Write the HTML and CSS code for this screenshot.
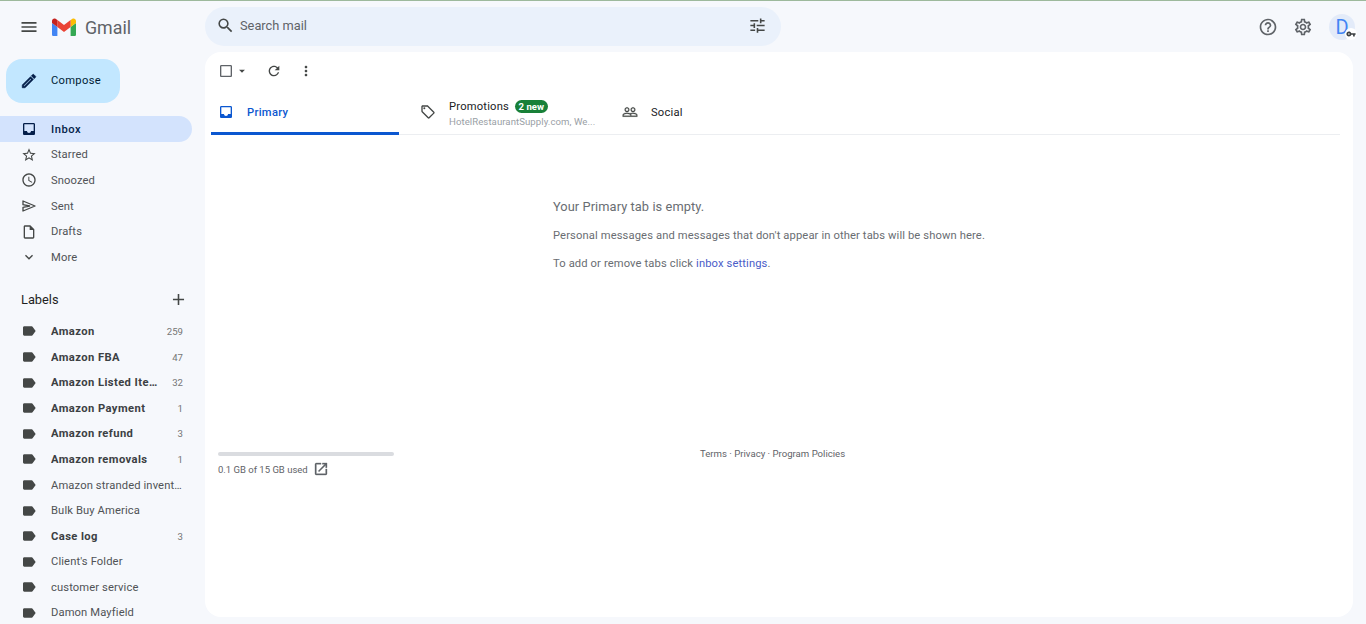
FILE: index.html
```html
<!DOCTYPE html>
<html lang="en">
<head>
<meta charset="utf-8">
<title>Gmail</title>
<link rel="stylesheet" href="styles.css">
</head>
<body>
<svg class="defs" width="0" height="0">
  <symbol id="i-menu" viewBox="0 0 24 24"><path d="M3 18h18v-2H3v2zm0-5h18v-2H3v2zm0-7v2h18V6H3z"/></symbol>
  <symbol id="i-search" viewBox="0 0 24 24"><path d="M15.5 14h-.79l-.28-.27A6.471 6.471 0 0 0 16 9.5 6.5 6.5 0 1 0 9.5 16c1.61 0 3.09-.59 4.23-1.57l.27.28v.79l5 4.99L20.49 19l-4.99-5zm-6 0C7.01 14 5 11.99 5 9.5S7.01 5 9.5 5 14 7.01 14 9.5 11.99 14 9.5 14z"/></symbol>
  <symbol id="i-tune" viewBox="0 0 24 24"><path d="M3 17v2h6v-2H3zM3 5v2h10V5H3zm10 16v-2h8v-2h-8v-2h-2v6h2zM7 9v2H3v2h4v2h2V9H7zm14 4v-2H11v2h10zm-6-4h2V7h4V5h-4V3h-2v6z"/></symbol>
  <symbol id="i-help" viewBox="0 0 24 24"><path d="M11 18h2v-2h-2v2zm1-16C6.48 2 2 6.48 2 12s4.48 10 10 10 10-4.48 10-10S17.52 2 12 2zm0 18c-4.41 0-8-3.59-8-8s3.59-8 8-8 8 3.59 8 8-3.59 8-8 8zm0-14c-2.21 0-4 1.79-4 4h2c0-1.1.9-2 2-2s2 .9 2 2c0 2-3 1.75-3 5h2c0-2.25 3-2.5 3-5 0-2.21-1.79-4-4-4z"/></symbol>
  <symbol id="i-gear" viewBox="0 0 24 24"><path d="M19.43 12.98c.04-.32.07-.64.07-.98 0-.34-.03-.66-.07-.98l2.11-1.65c.19-.15.24-.42.12-.64l-2-3.46c-.09-.16-.26-.25-.44-.25-.06 0-.12.01-.17.03l-2.49 1c-.52-.4-1.08-.73-1.69-.98l-.38-2.65C14.46 2.18 14.25 2 14 2h-4c-.25 0-.46.18-.49.42l-.38 2.65c-.61.25-1.17.59-1.69.98l-2.49-1c-.06-.02-.12-.03-.18-.03-.17 0-.34.09-.43.25l-2 3.46c-.13.22-.07.49.12.64l2.11 1.65c-.04.32-.07.65-.07.98 0 .33.03.66.07.98l-2.11 1.65c-.19.15-.24.42-.12.64l2 3.46c.09.16.26.25.44.25.06 0 .12-.01.17-.03l2.49-1c.52.4 1.08.73 1.69.98l.38 2.65c.03.24.24.42.49.42h4c.25 0 .46-.18.49-.42l.38-2.65c.61-.25 1.17-.59 1.69-.98l2.49 1c.06.02.12.03.18.03.17 0 .34-.09.43-.25l2-3.46c.12-.22.07-.49-.12-.64l-2.11-1.65zm-1.98-1.71c.04.31.05.52.05.73 0 .21-.02.43-.05.73l-.14 1.13.89.7 1.08.84-.7 1.21-1.27-.51-1.04-.42-.9.68c-.43.32-.84.56-1.25.73l-1.06.43-.16 1.13-.2 1.35h-1.4l-.19-1.35-.16-1.13-1.06-.43c-.43-.18-.83-.41-1.23-.71l-.91-.7-1.06.43-1.27.51-.7-1.21 1.08-.84.89-.7-.14-1.13c-.03-.31-.05-.54-.05-.74s.02-.43.05-.73l.14-1.13-.89-.7-1.08-.84.7-1.21 1.27.51 1.04.42.9-.68c.43-.32.84-.56 1.25-.73l1.06-.43.16-1.13.2-1.35h1.39l.19 1.35.16 1.13 1.06.43c.43.18.83.41 1.23.71l.91.7 1.06-.43 1.27-.51.7 1.21-1.07.85-.89.7.14 1.13zM12 8c-2.21 0-4 1.79-4 4s1.79 4 4 4 4-1.79 4-4-1.79-4-4-4zm0 6c-1.1 0-2-.9-2-2s.9-2 2-2 2 .9 2 2-.9 2-2 2z"/></symbol>
  <symbol id="i-edit" viewBox="0 0 24 24"><path d="M3 17.25V21h3.75L17.81 9.94l-3.75-3.75L3 17.25zM5.92 19H5v-.92l9.06-9.06.92.92L5.92 19zM20.71 5.63l-2.34-2.34c-.2-.2-.45-.29-.71-.29s-.51.09-.7.28l-1.83 1.83 3.75 3.75 1.83-1.83c.39-.39.39-1.02 0-1.41z"/></symbol>
  <symbol id="i-inbox" viewBox="0 0 24 24"><path d="M19 3H5c-1.1 0-2 .9-2 2v14c0 1.1.9 2 2 2h14c1.1 0 2-.9 2-2V5c0-1.1-.9-2-2-2zm0 12h-4c0 1.66-1.35 3-3 3s-3-1.34-3-3H5V5h14v10z"/></symbol>
  <symbol id="i-star" viewBox="0 0 24 24"><path d="M22 9.24l-7.19-.62L12 2 9.19 8.63 2 9.24l5.46 4.73L5.82 21 12 17.27 18.18 21l-1.63-7.03L22 9.24zM12 15.4l-3.76 2.27 1-4.28-3.32-2.88 4.38-.38L12 6.1l1.71 4.04 4.38.38-3.32 2.88 1 4.28L12 15.4z"/></symbol>
  <symbol id="i-clock" viewBox="0 0 24 24"><path d="M11.99 2C6.47 2 2 6.48 2 12s4.47 10 9.99 10C17.52 22 22 17.52 22 12S17.52 2 11.99 2zM12 20c-4.42 0-8-3.58-8-8s3.58-8 8-8 8 3.58 8 8-3.58 8-8 8zm.5-13H11v6l5.25 3.15.75-1.23-4.5-2.67z"/></symbol>
  <symbol id="i-send" viewBox="0 0 24 24"><path fill="none" stroke="#444746" stroke-width="2" stroke-linejoin="round" d="M3 4.5L21 12 3 19.5V14l10-2-10-2z"/></symbol>
  <symbol id="i-draft" viewBox="0 0 24 24"><path d="M14 2H6c-1.1 0-2 .9-2 2v16c0 1.1.89 2 1.99 2H18c1.1 0 2-.9 2-2V8l-6-6zM6 20V4h7v5h5v11H6z"/></symbol>
  <symbol id="i-chev" viewBox="0 0 24 24"><path d="M16.59 8.59L12 13.17 7.41 8.59 6 10l6 6 6-6z"/></symbol>
  <symbol id="i-label" viewBox="0 0 24 24"><path d="M17.63 5.84C17.27 5.33 16.67 5 16 5L5 5.01C3.9 5.01 3 5.9 3 7v10c0 1.1.9 1.99 2 1.99L16 19c.67 0 1.27-.33 1.63-.84L22 12l-4.37-6.16z"/></symbol>
  <symbol id="i-plus" viewBox="0 0 24 24"><path d="M19 13h-6v6h-2v-6H5v-2h6V5h2v6h6v2z"/></symbol>
  <symbol id="i-check" viewBox="0 0 24 24"><path d="M19 5v14H5V5h14m0-2H5c-1.1 0-2 .9-2 2v14c0 1.1.9 2 2 2h14c1.1 0 2-.9 2-2V5c0-1.1-.9-2-2-2z"/></symbol>
  <symbol id="i-drop" viewBox="0 0 24 24"><path d="M7 10l5 5 5-5z"/></symbol>
  <symbol id="i-refresh" viewBox="0 0 24 24"><path d="M17.65 6.35C16.2 4.9 14.21 4 12 4c-4.42 0-7.99 3.58-7.99 8s3.57 8 7.99 8c3.73 0 6.84-2.55 7.73-6h-2.08c-.82 2.33-3.04 4-5.65 4-3.31 0-6-2.69-6-6s2.69-6 6-6c1.66 0 3.14.69 4.22 1.78L13 11h7V4l-2.35 2.35z"/></symbol>
  <symbol id="i-vert" viewBox="0 0 24 24"><path d="M12 8c1.1 0 2-.9 2-2s-.9-2-2-2-2 .9-2 2 .9 2 2 2zm0 2c-1.1 0-2 .9-2 2s.9 2 2 2 2-.9 2-2-.9-2-2-2zm0 6c-1.1 0-2 .9-2 2s.9 2 2 2 2-.9 2-2-.9-2-2-2z"/></symbol>
  <symbol id="i-tag" viewBox="0 0 24 24"><path d="M21.41 11.58l-9-9C12.05 2.22 11.55 2 11 2H4c-1.1 0-2 .9-2 2v7c0 .55.22 1.05.59 1.42l9 9c.36.36.86.58 1.41.58.55 0 1.05-.22 1.41-.59l7-7c.37-.36.59-.86.59-1.41 0-.55-.23-1.06-.59-1.42zM13 20.01L4 11V4h7v-.01l9 9-7 7.02z"/><circle cx="6.5" cy="6.5" r="1.5"/></symbol>
  <symbol id="i-people" viewBox="0 0 24 24"><path d="M16.5 13c-1.2 0-3.07.34-4.5 1-1.43-.67-3.3-1-4.5-1C5.33 13 1 14.08 1 16.25V19h22v-2.75c0-2.17-4.33-3.25-6.5-3.25zm-4 4.5h-10v-1.25c0-.54 2.56-1.75 5-1.75s5 1.21 5 1.75v1.25zm9 0H14v-1.25c0-.46-.2-.86-.52-1.22.88-.3 1.96-.53 3.02-.53 2.44 0 5 1.21 5 1.75v1.25zM7.5 12c1.93 0 3.5-1.57 3.5-3.5S9.43 5 7.5 5 4 6.57 4 8.5 5.57 12 7.5 12zm0-5.5c1.1 0 2 .9 2 2s-.9 2-2 2-2-.9-2-2 .9-2 2-2zm9 5.5c1.93 0 3.5-1.57 3.5-3.5S18.43 5 16.5 5 13 6.57 13 8.5s1.57 3.5 3.5 3.5zm0-5.5c1.1 0 2 .9 2 2s-.9 2-2 2-2-.9-2-2 .9-2 2-2z"/></symbol>
  <symbol id="i-open" viewBox="0 0 24 24"><path d="M19 19H5V5h7V3H5c-1.11 0-2 .9-2 2v14c0 1.1.89 2 2 2h14c1.1 0 2-.9 2-2v-7h-2v7zM14 3v2h3.59l-9.83 9.83 1.41 1.41L19 6.41V10h2V3h-7z"/></symbol>
  <symbol id="i-key" viewBox="0 0 24 24"><path d="M12.65 10C11.83 7.67 9.61 6 7 6c-3.31 0-6 2.69-6 6s2.69 6 6 6c2.61 0 4.83-1.67 5.65-4H17v4h4v-4h2v-4H12.65zM7 14c-1.1 0-2-.9-2-2s.9-2 2-2 2 .9 2 2-.9 2-2 2z"/></symbol>
</svg>

<div class="app">
  <header class="topbar">
    <div class="brand">
      <svg class="ico ico-menu"><use href="#i-menu"/></svg>
      <svg class="logo" viewBox="0 0 24 18">
        <path fill="#4285f4" d="M1.6 18H5.4V9L0 5v11.4C0 17.3.7 18 1.6 18z"/>
        <path fill="#34a853" d="M18.6 18h3.8c.9 0 1.6-.7 1.6-1.6V5l-5.4 4z"/>
        <path fill="#fbbc04" d="M18.6 2v7L24 5V2.9c0-2-2.3-3.1-3.9-1.9z"/>
        <path fill="#ea4335" d="M5.4 9V2L12 7l6.6-5v7L12 14z"/>
        <path fill="#c5221f" d="M0 2.9V5l5.4 4V2L3.9 1C2.3-.2 0 .9 0 2.9z"/>
      </svg>
      <span class="wordmark">Gmail</span>
    </div>
    <div class="search">
      <svg class="ico ico-search"><use href="#i-search"/></svg>
      <span class="search-text">Search mail</span>
      <svg class="ico ico-tune"><use href="#i-tune"/></svg>
    </div>
    <div class="actions">
      <svg class="ico ico-top"><use href="#i-help"/></svg>
      <svg class="ico ico-top"><use href="#i-gear"/></svg>
      <div class="avatar">D<span class="key"><svg class="ico-key"><use href="#i-key"/></svg></span></div>
    </div>
  </header>

  <div class="body">
    <aside class="sidebar">
      <div class="compose">
        <svg class="ico ico-edit"><use href="#i-edit"/></svg>
        <span>Compose</span>
      </div>
      <nav class="nav">
        <a class="row active"><svg class="ico"><use href="#i-inbox"/></svg><span class="name">Inbox</span></a>
        <a class="row"><svg class="ico"><use href="#i-star"/></svg><span class="name">Starred</span></a>
        <a class="row"><svg class="ico"><use href="#i-clock"/></svg><span class="name">Snoozed</span></a>
        <a class="row"><svg class="ico"><use href="#i-send"/></svg><span class="name">Sent</span></a>
        <a class="row"><svg class="ico"><use href="#i-draft"/></svg><span class="name">Drafts</span></a>
        <a class="row"><svg class="ico"><use href="#i-chev"/></svg><span class="name">More</span></a>
      </nav>
      <div class="labels-head">
        <span>Labels</span>
        <svg class="ico ico-plus"><use href="#i-plus"/></svg>
      </div>
      <nav class="nav">
        <a class="row bold"><svg class="ico"><use href="#i-label"/></svg><span class="name">Amazon</span><span class="count">259</span></a>
        <a class="row bold"><svg class="ico"><use href="#i-label"/></svg><span class="name">Amazon FBA</span><span class="count">47</span></a>
        <a class="row bold"><svg class="ico"><use href="#i-label"/></svg><span class="name">Amazon Listed Items</span><span class="count">32</span></a>
        <a class="row bold"><svg class="ico"><use href="#i-label"/></svg><span class="name">Amazon Payment</span><span class="count">1</span></a>
        <a class="row bold"><svg class="ico"><use href="#i-label"/></svg><span class="name">Amazon refund</span><span class="count">3</span></a>
        <a class="row bold"><svg class="ico"><use href="#i-label"/></svg><span class="name">Amazon removals</span><span class="count">1</span></a>
        <a class="row"><svg class="ico"><use href="#i-label"/></svg><span class="name">Amazon stranded inventory</span></a>
        <a class="row"><svg class="ico"><use href="#i-label"/></svg><span class="name">Bulk Buy America</span></a>
        <a class="row bold"><svg class="ico"><use href="#i-label"/></svg><span class="name">Case log</span><span class="count">3</span></a>
        <a class="row"><svg class="ico"><use href="#i-label"/></svg><span class="name">Client's Folder</span></a>
        <a class="row"><svg class="ico"><use href="#i-label"/></svg><span class="name">customer service</span></a>
        <a class="row"><svg class="ico"><use href="#i-label"/></svg><span class="name">Damon Mayfield</span></a>
      </nav>
    </aside>

    <main class="card">
      <div class="toolbar">
        <svg class="ico ico-check"><use href="#i-check"/></svg>
        <svg class="ico ico-drop"><use href="#i-drop"/></svg>
        <svg class="ico ico-refresh"><use href="#i-refresh"/></svg>
        <svg class="ico ico-vert"><use href="#i-vert"/></svg>
      </div>
      <div class="tabs">
        <div class="tab tab-primary">
          <svg class="ico"><use href="#i-inbox"/></svg>
          <span class="tab-name">Primary</span>
        </div>
        <div class="tab tab-promo">
          <svg class="ico"><use href="#i-tag"/></svg>
          <div class="tab-stack">
            <div class="tab-title"><span class="tab-name">Promotions</span><span class="badge">2 new</span></div>
            <div class="tab-sub">HotelRestaurantSupply.com, We...</div>
          </div>
        </div>
        <div class="tab tab-social">
          <svg class="ico"><use href="#i-people"/></svg>
          <span class="tab-name">Social</span>
        </div>
      </div>
      <section class="empty">
        <h2 class="empty-title">Your Primary tab is empty.</h2>
        <p class="empty-line">Personal messages and messages that don't appear in other tabs will be shown here.</p>
        <p class="empty-line">To add or remove tabs click <span class="link">inbox settings</span>.</p>
      </section>
      <footer class="foot">
        <div class="storage">
          <div class="bar"></div>
          <div class="used"><span>0.1 GB of 15 GB used</span><svg class="ico ico-open"><use href="#i-open"/></svg></div>
        </div>
        <div class="terms">Terms · Privacy · Program Policies</div>
      </footer>
    </main>
  </div>
</div>
</body>
</html>
```
FILE: styles.css
```css
* { box-sizing: border-box; }
html, body { margin: 0; height: 100%; }
body {
  background: #f6f8fc;
  font-family: Roboto, "Liberation Sans", sans-serif;
  font-size: 11.2px;
  color: #444746;
  overflow: hidden;
}
.defs { position: absolute; }
.ico { width: 16px; height: 16px; fill: #444746; flex: none; display: block; }

.app { height: 624px; display: flex; flex-direction: column; border-top: 1px solid #9db99c; }

.topbar { height: 51px; display: flex; align-items: center; flex: none; }
.brand { width: 205px; display: flex; align-items: center; padding-left: 19px; flex: none; padding-top: 1px; }
.ico-menu { width: 20px; height: 20px; }
.logo { width: 24px; height: 18px; margin-left: 13px; }
.wordmark { font-size: 17.8px; color: #5f6368; margin-left: 9px; }

.search {
  width: 576px; height: 39px; border-radius: 20px; background: #eaf1fb;
  display: flex; align-items: center; padding: 0 14px 2px 11px; flex: none;
}
.ico-search { width: 19px; height: 19px; }
.search-text { margin-left: 5px; font-size: 12.8px; color: #5f6368; flex: 1; }
.ico-tune { width: 19px; height: 19px; }

.actions { margin-left: auto; display: flex; align-items: center; gap: 15px; padding-right: 11px; padding-top: 1px; }
.ico-top { width: 20px; height: 20px; fill: #5f6368; }
.avatar {
  position: relative; width: 26px; height: 26px; border-radius: 50%; margin-left: 1px;
  background: #e3ebf9; color: #4285f4; font-size: 20px; line-height: 26px; text-align: center;
}
.key {
  position: absolute; right: -2px; bottom: 0; width: 12px; height: 12px; border-radius: 50%;
  background: #fff; display: flex; align-items: center; justify-content: center;
}
.ico-key { width: 10px; height: 10px; fill: #3c4043; display: block; }

.body { flex: 1; display: flex; min-height: 0; }
.sidebar { width: 205px; flex: none; overflow: hidden; padding-top: 7px; }

.compose {
  width: 114px; height: 44px; margin-left: 6px; border-radius: 16px; background: #c2e7ff;
  display: flex; align-items: center; padding: 0 0 1px 14px; gap: 13px; color: #001d35; font-weight: 400; font-size: 11.2px; letter-spacing: .3px;
}
.ico-edit { width: 18px; height: 18px; fill: #041e49; stroke: #041e49; stroke-width: .8px; }

.nav { display: flex; flex-direction: column; }
.compose + .nav { margin-top: 13px; }
.row {
  height: 25.6px; width: 192px; display: flex; align-items: center; padding: 1px 9px 0 21px;
  border-radius: 0 13px 13px 0; color: #505356; letter-spacing: .12px;
}
.row .ico { margin-right: 14px; }
.name { flex: 1; min-width: 0; overflow: hidden; white-space: nowrap; text-overflow: ellipsis; }
.count { font-size: 9.6px; color: #757575; margin-left: 13px; letter-spacing: 0; }
.row.active { background: #d3e3fd; color: #041e49; font-weight: 500; letter-spacing: .5px; }
.row.active .ico { fill: #041e49; }
.row.bold { font-weight: 700; color: #202124; letter-spacing: .42px; }
.row.bold .count { font-weight: 400; letter-spacing: 0; }
.row.bold .name { color: #3c4043; }

.labels-head {
  height: 30px; margin-top: 15px; margin-bottom: 3.6px; display: flex; align-items: center;
  justify-content: space-between; width: 192px; padding: 0 4px 0 21px;
  font-size: 12.8px; color: #1f1f1f;
}
.ico-plus { width: 19px; height: 19px; fill: #444746; }

.card {
  flex: 1; margin: 0 13px 7px 0; background: #fff; border-radius: 16px;
  display: flex; flex-direction: column; min-width: 0; padding-right: 13px;
}
.toolbar { height: 38px; display: flex; align-items: center; padding-left: 13px; flex: none; }
.ico-check { width: 16px; height: 16px; fill: #5f6368; }
.ico-drop { width: 14px; height: 14px; margin-left: 1px; fill: #444746; }
.ico-refresh { width: 16px; height: 16px; margin-left: 17px; fill: #444746; }
.ico-vert { width: 16px; height: 16px; margin-left: 16px; fill: #444746; }

.tabs { height: 45px; display: flex; margin-left: 6px; border-bottom: 1px solid #eceef1; flex: none; }
.tab { display: flex; align-items: center; height: 45px; flex: none; }
.tab-primary { width: 188px; padding-left: 7px; border-bottom: 3px solid #0b57d0; color: #0b57d0; padding-top: 2px; }
.tab-primary .ico { fill: #0b57d0; margin-right: 13px; }
.tab-primary .tab-name { font-weight: 500; letter-spacing: .3px; }
.tab-name { font-size: 11.2px; letter-spacing: .2px; }
.tab-promo { width: 216px; padding-left: 21px; padding-bottom: 1px; }
.tab-promo .ico { margin-right: 13px; fill: #444746; }
.tab-stack { display: flex; flex-direction: column; gap: 2px; padding-top: 2px; }
.tab-title { display: flex; align-items: center; gap: 6px; color: #202124; height: 14px; }
.tab-sub { font-size: 9.6px; color: #9aa0a6; white-space: nowrap; letter-spacing: .07px; }
.badge { background: #188038; color: #fff; font-size: 9.6px; font-weight: 700; border-radius: 7px; padding: 0 3.5px; height: 13px; line-height: 13px; }
.tab-social { padding-left: 7px; color: #202124; padding-bottom: 1px; }
.tab-social .ico { margin-right: 13px; stroke: #444746; stroke-width: .4px; }

.empty { padding: 64px 0 0 348px; height: 317px; flex: none; }
.empty-title { margin: 0; font-size: 12.8px; font-weight: 400; line-height: 16px; color: #696d72; letter-spacing: .08px; }
.empty-line { margin: 12px 0 0; font-size: 11.2px; line-height: 16px; color: #696d72; letter-spacing: .12px; }
.empty-title + .empty-line { margin-top: 13px; }
.link { color: #4a5cc8; }

.foot { display: flex; padding-left: 13px; flex: none; margin-top: 0; }
.storage { width: 176px; flex: none; }
.bar { height: 4px; border-radius: 2px; background: #dadce0; }
.used { display: flex; align-items: center; margin-top: 5px; font-size: 9.5px; color: #5f6368; height: 16px; }
.ico-open { width: 16px; height: 16px; margin-left: 5px; fill: #5f6368; stroke: #5f6368; stroke-width: .5px; }
.terms { font-size: 9.6px; color: #5f6368; margin-left: 306px; margin-top: -4px; white-space: nowrap; }
```
